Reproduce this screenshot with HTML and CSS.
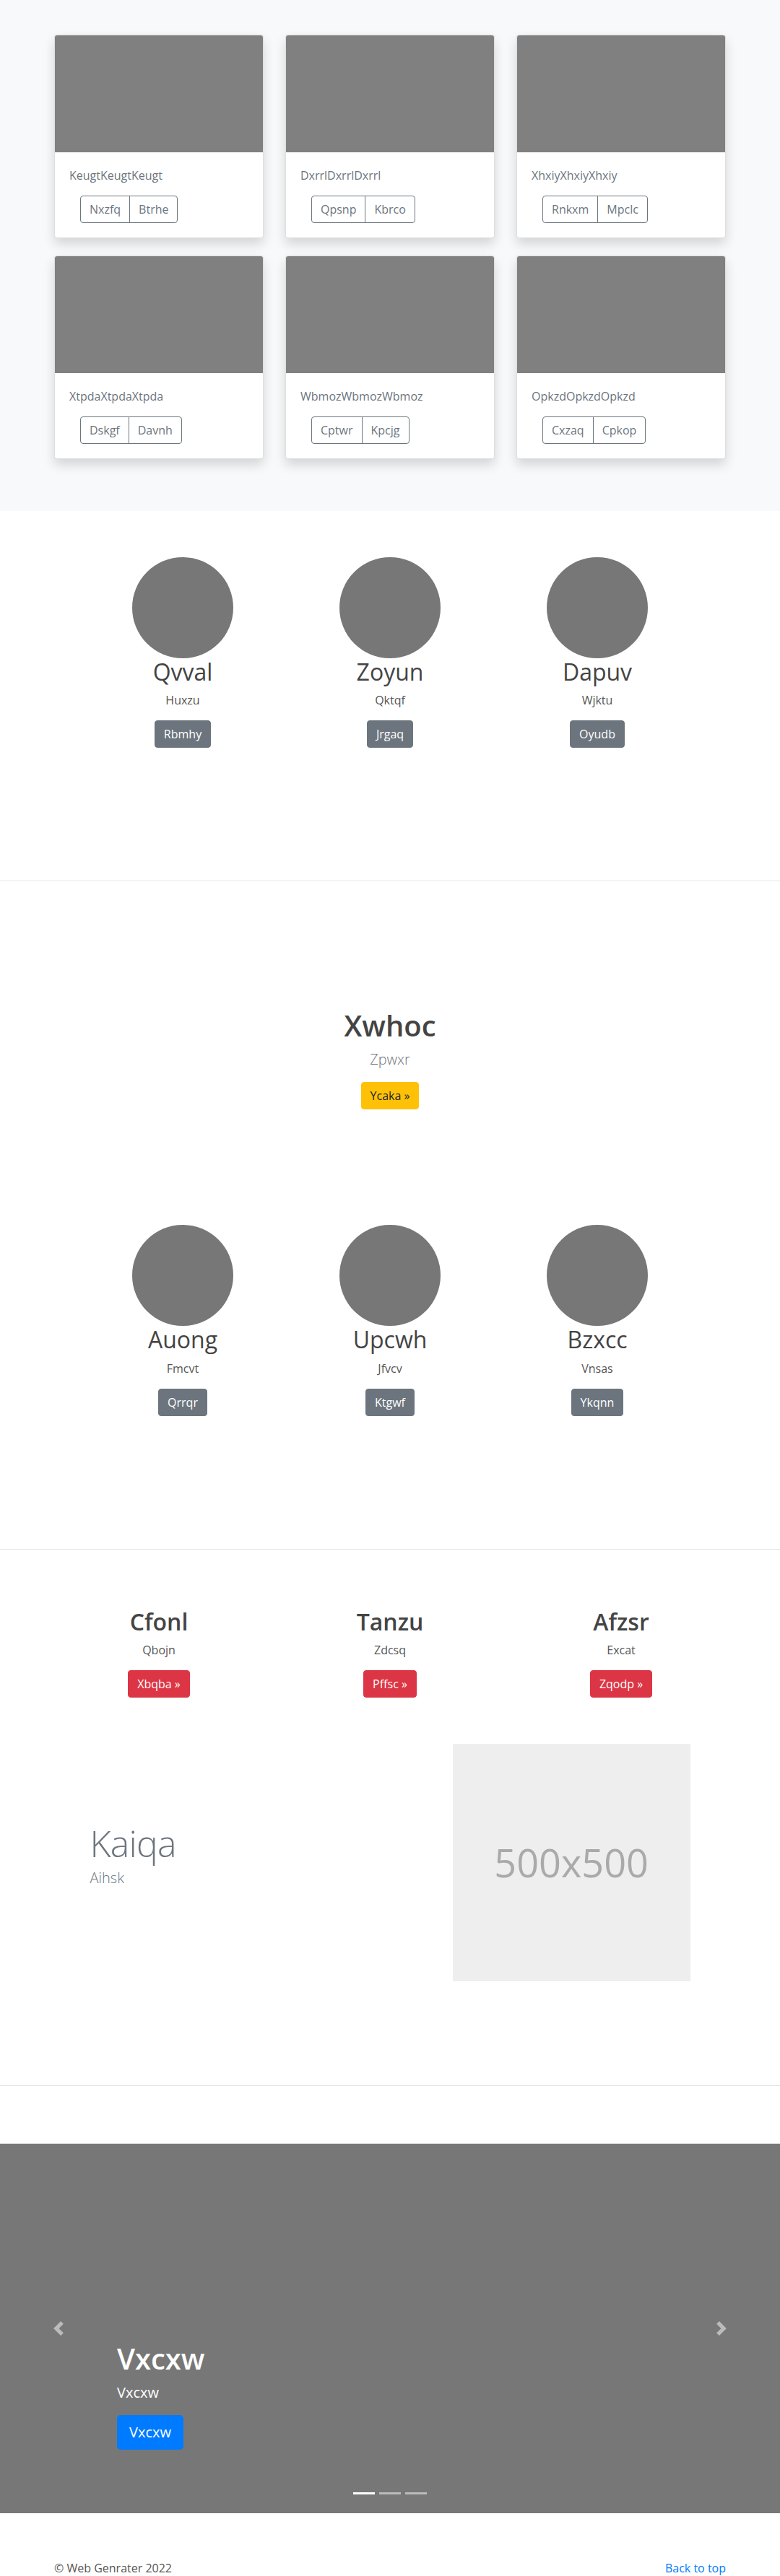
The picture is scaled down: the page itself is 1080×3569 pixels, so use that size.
FILE: index.html
```html
<!DOCTYPE html>
<html lang="en">
<head>
<meta charset="utf-8">
<title>Web Genrater</title>
<link rel="stylesheet" href="styles.css">
</head>
<body>

<section class="album">
  <div class="container">
    <div class="card-grid">
      <div class="card">
        <div class="card-img"></div>
        <div class="card-body">
          <p class="card-text">KeugtKeugtKeugt</p>
          <div class="btn-group"><a href="#" class="btn btn-outline">Nxzfq</a><a href="#" class="btn btn-outline">Btrhe</a></div>
        </div>
      </div>
      <div class="card">
        <div class="card-img"></div>
        <div class="card-body">
          <p class="card-text">DxrrlDxrrlDxrrl</p>
          <div class="btn-group"><a href="#" class="btn btn-outline">Qpsnp</a><a href="#" class="btn btn-outline">Kbrco</a></div>
        </div>
      </div>
      <div class="card">
        <div class="card-img"></div>
        <div class="card-body">
          <p class="card-text">XhxiyXhxiyXhxiy</p>
          <div class="btn-group"><a href="#" class="btn btn-outline">Rnkxm</a><a href="#" class="btn btn-outline">Mpclc</a></div>
        </div>
      </div>
      <div class="card">
        <div class="card-img"></div>
        <div class="card-body">
          <p class="card-text">XtpdaXtpdaXtpda</p>
          <div class="btn-group"><a href="#" class="btn btn-outline">Dskgf</a><a href="#" class="btn btn-outline">Davnh</a></div>
        </div>
      </div>
      <div class="card">
        <div class="card-img"></div>
        <div class="card-body">
          <p class="card-text">WbmozWbmozWbmoz</p>
          <div class="btn-group"><a href="#" class="btn btn-outline">Cptwr</a><a href="#" class="btn btn-outline">Kpcjg</a></div>
        </div>
      </div>
      <div class="card">
        <div class="card-img"></div>
        <div class="card-body">
          <p class="card-text">OpkzdOpkzdOpkzd</p>
          <div class="btn-group"><a href="#" class="btn btn-outline">Cxzaq</a><a href="#" class="btn btn-outline">Cpkop</a></div>
        </div>
      </div>
    </div>
  </div>
</section>

<section class="marketing bordered">
  <div class="marketing-row">
    <div class="person">
      <div class="circle"></div>
      <h2 class="person-name">Qvval</h2>
      <p>Huxzu</p>
      <div class="btn-wrap"><a href="#" class="btn btn-secondary">Rbmhy</a></div>
    </div>
    <div class="person">
      <div class="circle"></div>
      <h2 class="person-name">Zoyun</h2>
      <p>Qktqf</p>
      <div class="btn-wrap"><a href="#" class="btn btn-secondary">Jrgaq</a></div>
    </div>
    <div class="person">
      <div class="circle"></div>
      <h2 class="person-name">Dapuv</h2>
      <p>Wjktu</p>
      <div class="btn-wrap"><a href="#" class="btn btn-secondary">Oyudb</a></div>
    </div>
  </div>
</section>

<section class="jumbo">
  <h1 class="jumbo-title">Xwhoc</h1>
  <p class="lead muted">Zpwxr</p>
  <div class="btn-wrap"><a href="#" class="btn btn-warning">Ycaka &raquo;</a></div>
</section>

<section class="marketing bordered">
  <div class="marketing-row">
    <div class="person">
      <div class="circle"></div>
      <h2 class="person-name">Auong</h2>
      <p>Fmcvt</p>
      <div class="btn-wrap"><a href="#" class="btn btn-secondary">Qrrqr</a></div>
    </div>
    <div class="person">
      <div class="circle"></div>
      <h2 class="person-name">Upcwh</h2>
      <p>Jfvcv</p>
      <div class="btn-wrap"><a href="#" class="btn btn-secondary">Ktgwf</a></div>
    </div>
    <div class="person">
      <div class="circle"></div>
      <h2 class="person-name">Bzxcc</h2>
      <p>Vnsas</p>
      <div class="btn-wrap"><a href="#" class="btn btn-secondary">Ykqnn</a></div>
    </div>
  </div>
</section>

<section class="features bordered">
  <div class="feature-row">
    <div class="feature">
      <h2 class="feature-title">Cfonl</h2>
      <p>Qbojn</p>
      <div class="btn-wrap"><a href="#" class="btn btn-danger">Xbqba &raquo;</a></div>
    </div>
    <div class="feature">
      <h2 class="feature-title">Tanzu</h2>
      <p>Zdcsq</p>
      <div class="btn-wrap"><a href="#" class="btn btn-danger">Pffsc &raquo;</a></div>
    </div>
    <div class="feature">
      <h2 class="feature-title">Afzsr</h2>
      <p>Excat</p>
      <div class="btn-wrap"><a href="#" class="btn btn-danger">Zqodp &raquo;</a></div>
    </div>
  </div>

  <div class="featurette">
    <div class="featurette-text">
      <h2 class="featurette-heading">Kaiqa</h2>
      <p class="lead muted">Aihsk</p>
    </div>
    <div class="featurette-media">
      <div class="placeholder">500x500</div>
    </div>
  </div>
</section>

<section class="carousel">
  <div class="carousel-caption">
    <h1 class="caption-title">Vxcxw</h1>
    <p class="caption-text">Vxcxw</p>
    <div class="btn-wrap start"><a href="#" class="btn btn-lg btn-primary">Vxcxw</a></div>
  </div>
  <a href="#" class="carousel-control prev" aria-label="Previous">
    <svg width="20" height="20" viewBox="0 0 8 8"><path fill="#fff" d="M5.25 0l-4 4 4 4 1.5-1.5L4.25 4l2.5-2.5L5.25 0z"/></svg>
  </a>
  <a href="#" class="carousel-control next" aria-label="Next">
    <svg width="20" height="20" viewBox="0 0 8 8"><path fill="#fff" d="M2.75 0l-1.5 1.5L3.75 4l-2.5 2.5L2.75 8l4-4-4-4z"/></svg>
  </a>
  <div class="indicators">
    <span class="indicator active"></span>
    <span class="indicator"></span>
    <span class="indicator"></span>
  </div>
</section>

<footer class="footer">
  <p>&copy; Web Genrater 2022</p>
  <p><a href="#" class="link">Back to top</a></p>
</footer>

</body>
</html>
```

FILE: styles.css
```css
* {
  box-sizing: border-box;
}

html,
body {
  margin: 0;
  padding: 0;
}

body {
  font-family: "Open Sans", "Noto Sans", sans-serif;
  font-size: 16px;
  line-height: 1.5;
  color: #555;
  background: #fff;
}

p {
  margin: 0 0 16px;
}

h1,
h2 {
  margin: 0 0 8px;
  line-height: 1.2;
}

a {
  text-decoration: none;
}

/* ---------- buttons ---------- */
.btn {
  display: inline-block;
  font-size: 16px;
  line-height: 1.5;
  padding: 6px 12px;
  border: 1px solid transparent;
  border-radius: 4px;
  white-space: nowrap;
}

.btn-outline {
  color: #6c757d;
  border-color: #6c757d;
  background: transparent;
}

.btn-secondary {
  color: #fff;
  background: #6c757d;
  border-color: #6c757d;
}

.btn-warning {
  color: #212529;
  background: #ffc107;
  border-color: #ffc107;
}

.btn-danger {
  color: #fff;
  background: #dc3545;
  border-color: #dc3545;
}

.btn-primary {
  color: #fff;
  background: #007bff;
  border-color: #007bff;
}

.btn-lg {
  font-size: 20px;
  padding: 8px 16px;
  border-radius: 4.8px;
}

.btn-wrap {
  display: flex;
  justify-content: center;
  margin-bottom: 16px;
}

.btn-wrap.start {
  justify-content: flex-start;
}

.btn-group {
  display: flex;
  margin-left: 15px;
}

.btn-group .btn:first-child {
  border-radius: 4px 0 0 4px;
}

.btn-group .btn + .btn {
  margin-left: -1px;
  border-radius: 0 4px 4px 0;
}

/* ---------- album ---------- */
.album {
  background: #f8f9fa;
  padding: 48px 0 72px;
}

.container {
  width: 930px;
  margin: 0 auto;
}

.card-grid {
  display: grid;
  grid-template-columns: repeat(3, 1fr);
  gap: 24px 30px;
}

.card {
  background: #fff;
  border: 1px solid rgba(0, 0, 0, 0.125);
  border-radius: 4px;
  box-shadow: 0 8px 16px rgba(0, 0, 0, 0.15);
  overflow: hidden;
}

.card-img {
  height: 162px;
  background: #808080;
}

.card-body {
  padding: 20px;
}

.card-text {
  color: #6c757d;
}

/* ---------- marketing circles ---------- */
.bordered {
  border-bottom: 1px solid #e5e5e5;
}

.marketing {
  padding: 64px 0 168px;
}

.marketing-row {
  width: 861px;
  margin: 0 auto;
  display: grid;
  grid-template-columns: repeat(3, 1fr);
}

.person {
  display: flex;
  flex-direction: column;
  align-items: center;
  text-align: center;
}

.circle {
  width: 140px;
  height: 140px;
  border-radius: 50%;
  background: #777;
}

.person-name {
  font-size: 32px;
  font-weight: 400;
  color: #444;
}

/* ---------- jumbotron ---------- */
.jumbo {
  padding: 176px 0 80px;
  text-align: center;
}

.jumbo-title {
  font-size: 40px;
  font-weight: 600;
  color: #444;
}

.lead {
  font-size: 20px;
  font-weight: 300;
}

.muted {
  color: #6c757d;
}

/* ---------- features ---------- */
.features {
  padding: 81px 0 144px;
}

.feature-row {
  width: 960px;
  margin: 0 auto;
  display: grid;
  grid-template-columns: repeat(3, 1fr);
  text-align: center;
}

.feature-title {
  font-size: 32px;
  font-weight: 600;
  color: #444;
}

.featurette {
  width: 861px;
  margin: 48px auto 0;
  display: grid;
  grid-template-columns: 7fr 5fr;
  align-items: center;
}

.featurette-text {
  padding: 0 15px;
}

.featurette-heading {
  font-size: 50px;
  font-weight: 300;
  line-height: 1;
  letter-spacing: -0.8px;
  color: #6c757d;
}

.featurette-media {
  padding: 0 15px;
}

.placeholder {
  width: 100%;
  aspect-ratio: 1 / 1;
  background: #eee;
  color: #aaa;
  font-size: 54px;
  display: flex;
  align-items: center;
  justify-content: center;
}

/* ---------- carousel ---------- */
.carousel {
  position: relative;
  height: 512px;
  margin: 80px 0 64px;
  background: #777;
}

.carousel-caption {
  position: absolute;
  left: 15%;
  right: 15%;
  bottom: 52px;
  padding: 20px 0;
  color: #fff;
}

.caption-title {
  font-size: 40px;
  font-weight: 600;
  color: #fff;
}

.caption-text {
  font-size: 20px;
}

.carousel-control {
  position: absolute;
  top: 0;
  bottom: 0;
  width: 15%;
  display: flex;
  align-items: center;
  justify-content: center;
  opacity: 0.5;
}

.carousel-control.prev {
  left: 0;
}

.carousel-control.next {
  right: 0;
}

.indicators {
  position: absolute;
  left: 0;
  right: 0;
  bottom: 26px;
  display: flex;
  justify-content: center;
  gap: 6px;
}

.indicator {
  width: 30px;
  height: 3px;
  background: #fff;
  opacity: 0.5;
}

.indicator.active {
  opacity: 1;
}

/* ---------- footer ---------- */
.footer {
  width: 930px;
  margin: 0 auto;
  display: flex;
  justify-content: space-between;
  color: #555;
}

.link {
  color: #007bff;
}
```
